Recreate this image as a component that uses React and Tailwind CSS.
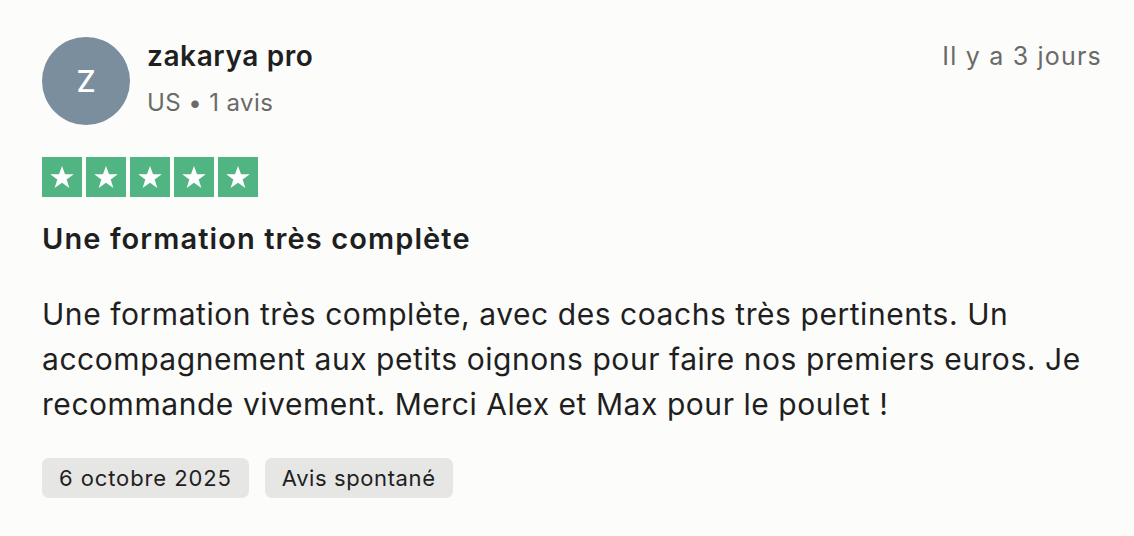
import React from 'react';

const Star = () => (
  <div className="w-10 h-10 bg-[#51b583] flex items-center justify-center">
    <svg viewBox="0 0 24 24" className="w-[28px] h-[28px]" fill="#fff">
      <path d="M12 2.5l2.6 7.1h7.5l-6.1 4.5 2.3 7.3L12 16.9l-6.3 4.5 2.3-7.3-6.1-4.5h7.5z" />
    </svg>
  </div>
);

export default function App() {
  return (
    <div
      className="w-[1134px] h-[536px] bg-[#fcfcfb] px-[42px] pt-[37px] text-[#1f1f1f]"
      style={{ fontFamily: 'Inter, "Noto Sans", sans-serif' }}
    >
      {/* Header */}
      <div className="flex items-start justify-between">
        <div className="flex items-center gap-[17px]">
          <div className="w-[88px] h-[88px] rounded-full bg-[#7b8e9e] flex items-center justify-center text-white text-[30px] font-medium">
            Z
          </div>
          <div className="flex flex-col -mt-[4px]">
            <span className="text-[28px] font-semibold leading-[36px] tracking-[0.6px]">zakarya pro</span>
            <span className="text-[24px] text-[#6b6a66] leading-[36px] mt-[11px] tracking-[0.4px]">US • 1 avis</span>
          </div>
        </div>
        <span className="text-[25px] text-[#6b6a66] leading-[36px] mt-[1px] mr-[-10px] tracking-[1.2px]">Il y a 3 jours</span>
      </div>

      {/* Stars */}
      <div className="flex gap-[4px] mt-[32px]">
        <Star />
        <Star />
        <Star />
        <Star />
        <Star />
      </div>

      <h2 className="text-[29px] font-semibold mt-[24px] leading-[36px] tracking-[1.1px]">
        Une formation très complète
      </h2>

      <p className="text-[30px] leading-[45px] mt-[35px] max-w-[1070px] tracking-[0.55px]">
        Une formation très complète, avec des coachs très pertinents. Un accompagnement aux petits oignons pour faire nos premiers euros. Je recommande vivement. Merci Alex et Max pour le poulet !
      </p>

      <div className="flex gap-[16px] mt-[31px]">
        <span className="h-10 px-[17px] rounded-[7px] bg-[#e6e6e4] text-[22px] tracking-[0.9px] flex items-center">6 octobre 2025</span>
        <span className="h-10 px-[17px] rounded-[7px] bg-[#e6e6e4] text-[22px] tracking-[0.6px] flex items-center">Avis spontané</span>
      </div>
    </div>
  );
}
